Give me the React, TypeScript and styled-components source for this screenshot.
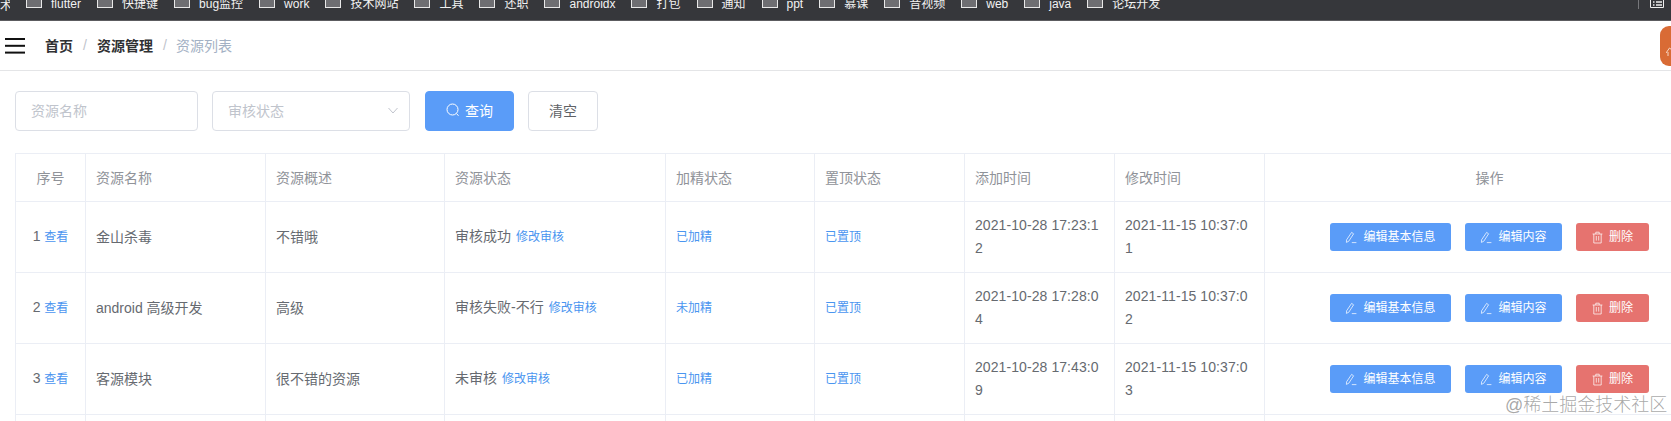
import React from "react";
import styled, { createGlobalStyle } from "styled-components";

const Global = createGlobalStyle`
  html, body { margin: 0; padding: 0; background: #fff; overflow: hidden; }
  body { font-family: "Liberation Sans", "Noto Sans CJK SC", sans-serif; }
  * { box-sizing: border-box; }
`;

const Page = styled.div`
  position: relative;
  width: 1671px;
  height: 421px;
  overflow: hidden;
  background: #fff;
`;

const BookmarkBar = styled.div`
  height: 21px;
  background: #36373b;
  border-bottom: 1px solid #5c5c60;
  display: flex;
  align-items: flex-start;
  overflow: hidden;
  color: #f2f2f2;
  font-size: 12px;
`;

const BookmarkRow = styled.div`
  flex: 1;
  display: flex;
  align-items: center;
  height: 14px;
  margin-top: -3px;
  padding-left: 26px;
  gap: 16px;
  white-space: nowrap;
`;

const CutLabel = styled.span`
  margin-left: -26px;
  width: 10px;
  overflow: hidden;
  flex-shrink: 0;
`;

const Bookmark = styled.span`
  display: flex;
  align-items: center;
  gap: 9px;
  line-height: 14px;
`;

const Folder = styled.i`
  display: block;
  width: 16px;
  height: 12px;
  margin-top: -5px;
  background: #6e6e72;
  border: 1px solid #e8e8e8;
  border-top: 0;
  flex-shrink: 0;
`;

const BarEnd = styled.div`
  display: flex;
  align-items: flex-start;
  gap: 11px;
  padding-right: 7px;
`;

const BarDivider = styled.i`
  display: block;
  width: 1px;
  height: 9px;
  background: #77777b;
`;

const NavBar = styled.div`
  height: 50px;
  border-bottom: 1px solid #e4e5e7;
  display: flex;
  align-items: center;
  padding-left: 5px;
  font-size: 14px;
`;

const Crumbs = styled.nav`
  display: flex;
  align-items: center;
  margin-left: 20px;
  padding-bottom: 2px;
  flex: 1;
`;

const Crumb = styled.span<{ $muted?: boolean }>`
  font-weight: ${(p) => (p.$muted ? 400 : 700)};
  color: ${(p) => (p.$muted ? "#a3b1c4" : "#303133")};
  margin-left: ${(p) => (p.$muted ? -1 : 0)}px;
`;

const Sep = styled.span`
  color: #c0c4cc;
  margin: 0 9px;
  width: 6px;
  text-align: center;
`;

const OrangeTab = styled.div`
  width: 40px;
  height: 40px;
  margin-right: -29px;
  background: #d96b35;
  border-radius: 9px;
  flex-shrink: 0;
  padding: 18px 0 0 6px;
`;

const Filters = styled.div`
  display: flex;
  align-items: center;
  padding: 20px 0 22px 15px;
  font-size: 14px;
`;

const Field = styled.div<{ $w: number; $mr: number; $pr?: number }>`
  width: ${(p) => p.$w}px;
  height: 40px;
  margin-right: ${(p) => p.$mr}px;
  border: 1px solid #dcdfe6;
  border-radius: 4px;
  color: #c0c4cc;
  padding: 0 ${(p) => p.$pr ?? 15}px 2px 15px;
  display: flex;
  align-items: center;
  justify-content: space-between;
`;

const FilterButton = styled.button<{ $primary?: boolean; $w: number; $mr?: number }>`
  width: ${(p) => p.$w}px;
  height: 40px;
  margin-right: ${(p) => p.$mr ?? 0}px;
  border: 1px solid ${(p) => (p.$primary ? "#5a9cf8" : "#dcdfe6")};
  background: ${(p) => (p.$primary ? "#5a9cf8" : "#fff")};
  color: ${(p) => (p.$primary ? "#fff" : "#606266")};
  border-radius: 4px;
  font: inherit;
  padding: 0 0 2px;
  display: flex;
  align-items: center;
  justify-content: center;
  gap: 5px;
`;

const TableWrap = styled.div`
  margin-left: 15px;
  width: 1700px;
`;

const Table = styled.table`
  border-collapse: separate;
  border-spacing: 0;
  table-layout: fixed;
  width: 1700px;
  border-top: 1px solid #ebeef5;
  border-left: 1px solid #ebeef5;
  font-size: 14px;
  color: #666a70;
`;

const Th = styled.th<{ $center?: boolean }>`
  height: 48px;
  padding: 2px 10px 0;
  font-weight: 400;
  color: #909399;
  text-align: ${(p) => (p.$center ? "center" : "left")};
  line-height: 23px;
  border-right: 1px solid #ebeef5;
  border-bottom: 1px solid #ebeef5;
`;

const Td = styled.td<{ $center?: boolean }>`
  height: 71px;
  padding: 12px 10px;
  line-height: 23px;
  text-align: ${(p) => (p.$center ? "center" : "left")};
  word-break: break-all;
  border-right: 1px solid #ebeef5;
  border-bottom: 1px solid #ebeef5;
`;

const TimeCell = styled(Td)`
  padding-right: 4px;
  letter-spacing: 0.08px;
`;

const SmallLink = styled.a<{ $gap?: number }>`
  color: #4a95f0;
  font-size: 12px;
  margin-left: ${(p) => p.$gap ?? 0}px;
`;

const Actions = styled.div`
  display: flex;
  justify-content: center;
  gap: 14px;
`;

const ActionButton = styled.button<{ $danger?: boolean; $w: number }>`
  width: ${(p) => p.$w}px;
  height: 28px;
  padding: 0;
  border: 0;
  border-radius: 3px;
  background: ${(p) => (p.$danger ? "#e6736f" : "#5a9cf8")};
  color: #fff;
  font: inherit;
  font-size: 12px;
  display: flex;
  align-items: center;
  justify-content: center;
  gap: 6px;
`;

const Watermark = styled.div`
  position: absolute;
  left: 1505px;
  top: 394px;
  font-size: 18px;
  line-height: 22px;
  color: rgba(130, 130, 130, 0.7);
  white-space: nowrap;
  font-weight: 300;
`;

const SearchIcon = () => (
  <svg width="14" height="14" viewBox="0 0 14 14" fill="none" stroke="#fff" strokeWidth="1">
    <circle cx="6.5" cy="6.5" r="5.5" />
    <path d="M10.5 10.5L12.5 12.8" />
  </svg>
);

const PenIcon = () => (
  <svg width="12" height="13" viewBox="0 0 12 13" fill="none" stroke="#fff" strokeWidth="0.8" strokeOpacity="0.9">
    <path d="M6.6 1.4L8.6 2.8L3.8 10.2L1.4 11.4L1.6 8.8Z" />
    <path d="M6.8 11.6H11.4" />
  </svg>
);

const TrashIcon = () => (
  <svg width="11" height="13" viewBox="0 0 11 13" fill="none" stroke="#fff" strokeWidth="0.8" strokeOpacity="0.9">
    <path d="M.6 3H10.4M3.8 3V1.2H7.2V3M1.8 3V12H9.2V3M4.3 5V9.6M6.7 5V9.6" />
  </svg>
);

const Chevron = () => (
  <svg width="10" height="7" viewBox="0 0 10 7" fill="none" stroke="#c0c4cc" strokeWidth="1">
    <path d="M.5 1L5 6L9.5 1" />
  </svg>
);

const Hamburger = () => (
  <svg width="20" height="16" viewBox="0 0 20 16" fill="#111">
    <rect x="0" y="0" width="20" height="2" />
    <rect x="0" y="6.8" width="20" height="2" />
    <rect x="0" y="13.6" width="20" height="2" />
  </svg>
);

const ListIcon = () => (
  <svg width="14" height="8" viewBox="0 0 14 8" fill="none" stroke="#eee" strokeWidth="1">
    <path d="M.5 -4V7.5H13.5V-4" />
    <path d="M3 2H4.5M6 2H12M3 5H4.5M6 5H12" strokeWidth="1.4" />
  </svg>
);

const TabGlyph = () => (
  <svg width="6" height="10" viewBox="0 0 6 10" fill="none" stroke="#f6d9c6" strokeWidth="1">
    <path d="M0 6L3.5 1L6 3M2 9V5" />
  </svg>
);

const bookmarks = ["flutter", "快捷键", "bug监控", "work", "技术网站", "工具", "还职", "androidx", "打包", "通知", "ppt", "慕课", "音视频", "web", "java", "论坛开发"];

const rows = [
  { n: 1, name: "金山杀毒", desc: "不错哦", status: "审核成功", good: "已加精", top: "已置顶", add: "2021-10-28 17:23:12", mod: "2021-11-15 10:37:01" },
  { n: 2, name: "android 高级开发", desc: "高级", status: "审核失败-不行", good: "未加精", top: "已置顶", add: "2021-10-28 17:28:04", mod: "2021-11-15 10:37:02" },
  { n: 3, name: "客源模块", desc: "很不错的资源", status: "未审核", good: "已加精", top: "已置顶", add: "2021-10-28 17:43:09", mod: "2021-11-15 10:37:03" },
];

const widths = [70, 180, 179, 221, 149, 150, 150, 150, 450];
const heads = ["序号", "资源名称", "资源概述", "资源状态", "加精状态", "置顶状态", "添加时间", "修改时间", "操作"];

const WrappedTime = ({ value }: { value: string }) => (
  <TimeCell>
    {value.slice(0, -1)}
    <br />
    {value.slice(-1)}
  </TimeCell>
);

export default function App() {
  return (
    <Page>
      <Global />
      <BookmarkBar>
        <BookmarkRow>
          <CutLabel>术</CutLabel>
          {bookmarks.map((b) => (
            <Bookmark key={b}>
              <Folder />
              {b}
            </Bookmark>
          ))}
        </BookmarkRow>
        <BarEnd>
          <BarDivider />
          <ListIcon />
        </BarEnd>
      </BookmarkBar>
      <NavBar>
        <Hamburger />
        <Crumbs>
          <Crumb>首页</Crumb>
          <Sep>/</Sep>
          <Crumb>资源管理</Crumb>
          <Sep>/</Sep>
          <Crumb $muted>资源列表</Crumb>
        </Crumbs>
        <OrangeTab>
          <TabGlyph />
        </OrangeTab>
      </NavBar>
      <Filters>
        <Field $w={183} $mr={14}>资源名称</Field>
        <Field $w={198} $mr={15} $pr={11}>
          审核状态
          <Chevron />
        </Field>
        <FilterButton $primary $w={89} $mr={14}>
          <SearchIcon />
          查询
        </FilterButton>
        <FilterButton $w={70}>清空</FilterButton>
      </Filters>
      <TableWrap>
        <Table>
          <colgroup>
            {widths.map((w, i) => (
              <col key={i} style={{ width: w }} />
            ))}
          </colgroup>
          <thead>
            <tr>
              {heads.map((h, i) => (
                <Th key={h} $center={i === 0 || i === 8}>{h}</Th>
              ))}
            </tr>
          </thead>
          <tbody>
            {rows.map((r) => (
              <tr key={r.n}>
                <Td $center>
                  {r.n} <SmallLink>查看</SmallLink>
                </Td>
                <Td>{r.name}</Td>
                <Td>{r.desc}</Td>
                <Td>
                  {r.status}
                  <SmallLink $gap={5}>修改审核</SmallLink>
                </Td>
                <Td><SmallLink>{r.good}</SmallLink></Td>
                <Td><SmallLink>{r.top}</SmallLink></Td>
                <WrappedTime value={r.add} />
                <WrappedTime value={r.mod} />
                <Td>
                  <Actions>
                    <ActionButton $w={121}><PenIcon />编辑基本信息</ActionButton>
                    <ActionButton $w={97}><PenIcon />编辑内容</ActionButton>
                    <ActionButton $danger $w={73}><TrashIcon />删除</ActionButton>
                  </Actions>
                </Td>
              </tr>
            ))}
            <tr>
              {widths.map((_, i) => (
                <Td key={i} />
              ))}
            </tr>
          </tbody>
        </Table>
      </TableWrap>
      <Watermark>@稀土掘金技术社区</Watermark>
    </Page>
  );
}
